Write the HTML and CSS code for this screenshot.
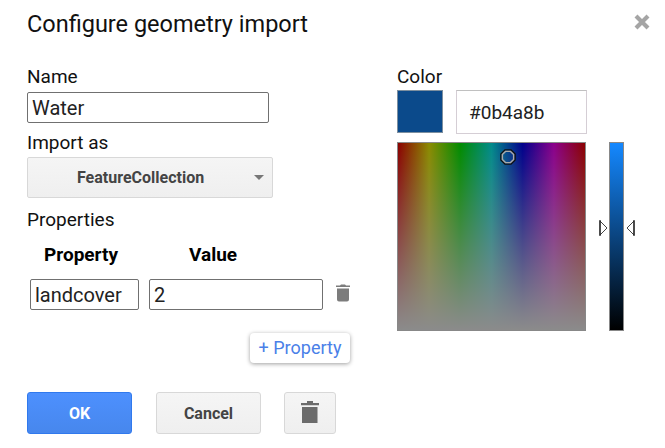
FILE: index.html
```html
<!DOCTYPE html>
<html lang="en">
<head>
<meta charset="utf-8">
<title>Configure geometry import</title>
<link rel="stylesheet" href="styles.css">
</head>
<body>
<main class="dialog">
  <header class="header">
    <h1 class="title">Configure geometry import</h1>
    <svg class="close" viewBox="0 0 18 18"><path d="M3 3L15 15M15 3L3 15"/></svg>
  </header>
  <div class="content">
    <section class="form">
      <label class="label name-label">Name</label>
      <input class="field" type="text" value="Water">
      <label class="label import-label">Import as</label>
      <div class="button select"><span class="select-text">FeatureCollection</span><i class="caret"></i></div>
      <div class="label properties-label">Properties</div>
      <div class="row heads"><span class="head">Property</span><span class="head">Value</span></div>
      <div class="row">
        <input class="field" type="text" value="landcover">
        <input class="field" type="text" value="2">
        <svg class="delete" viewBox="0 0 14 18"><path d="M0 1.5H4L5 .5H9L10 1.5H14V3H0ZM1 4.5H13V15.5Q13 17.5 11 17.5H3Q1 17.5 1 15.5Z"/></svg>
      </div>
      <div class="add">+ Property</div>
      <div class="actions">
        <div class="button action primary"><span class="ok">OK</span></div>
        <div class="button action"><span class="cancel">Cancel</span></div>
        <div class="button action trash"><svg class="trash-icon" viewBox="0 0 18 22"><path d="M0 2H6V0H12V2H18V4.3H0ZM1 6H16.5V22H1Z"/></svg></div>
      </div>
    </section>
    <section class="color">
      <div class="label color-label">Color</div>
      <div class="color-value"><div class="swatch"></div><input class="hex" type="text" value="#0b4a8b"></div>
      <div class="picker">
        <div class="spectrum"><svg class="cursor" viewBox="0 0 16 16"><path class="ring-dark" d="M5 .9H11L15.1 5V11L11 15.1H5L.9 11V5Z"/><path class="ring-light" d="M5.5 2.4H10.5L13.6 5.5V10.5L10.5 13.6H5.5L2.4 10.5V5.5Z"/></svg></div>
        <svg class="arrow" viewBox="0 0 9 16"><path d="M1 1V15L8 8Z"/><path class="bar" d="M1 0V16"/></svg>
        <div class="brightness"></div>
        <svg class="arrow" viewBox="0 0 9 16"><path d="M8 1V15L1 8Z"/><path class="bar" d="M8 0V16"/></svg>
      </div>
    </section>
  </div>
</main>
</body>
</html>
```
FILE: styles.css
```css
* { box-sizing: border-box; }
body { margin: 0; background: #fff; color: #111; font-family: Roboto, sans-serif; overflow: hidden; }
svg { display: block; flex: none; }
.dialog { width: 665px; height: 448px; padding: 0 14px 0 27px; }
.header { height: 65px; display: flex; justify-content: space-between; align-items: flex-start; }
.title { margin: 10px 0 0; font-size: 23.5px; line-height: 28px; font-weight: 400; white-space: nowrap; }
.close { width: 18px; height: 18px; margin: 13px 0 0; }
.close path { stroke: #a5a5a5; stroke-width: 4.2; fill: none; }
.content { display: flex; }
.form { width: 370px; flex: none; display: flex; flex-direction: column; align-items: flex-start; }
.label { display: block; font-size: 19px; line-height: 24px; white-space: nowrap; }
.field { width: 242px; height: 31px; margin: 0; padding: 0 4px; border: 1px solid #707070; border-radius: 2px; background: #fff; color: #222; font: 20px Roboto, sans-serif; outline: 0; }
.name-label { margin-bottom: 3px; }
.import-label { margin: 8px 0 2px; }
.button { border: 1px solid #d8d8d8; border-radius: 3px; background: linear-gradient(#f5f5f5, #efefef); color: #444; font-size: 16px; font-weight: 700; display: flex; align-items: center; justify-content: center; }
.select { width: 246px; height: 41px; justify-content: space-between; padding: 0 8px 0 49px; border-radius: 2px; }
.caret { border: 5px solid transparent; border-top-color: #777; border-bottom: 0; }
.properties-label { margin: 10px 0 9px; }
.row { display: flex; align-items: center; gap: 10px; margin-left: 3px; }
.row .field:first-child { width: 109px; }
.row .field:nth-child(2) { width: 174px; }
.heads { height: 26px; margin-bottom: 12px; }
.head { font-size: 19px; font-weight: 700; color: #000; }
.heads { padding-left: 14px; gap: 71px; }
.delete { width: 14px; height: 18px; margin: -3px 0 0 3px; fill: #7c7c7c; }
.add { width: 100px; height: 30px; margin: 23px 0 0 223px; border-radius: 4px; box-shadow: 0 1px 4px rgba(0,0,0,.38); color: #4a80e8; font-size: 18px; line-height: 30px; text-align: center; white-space: nowrap; }
.actions { display: flex; margin-top: 29px; }
.action { width: 105px; height: 42px; margin-right: 24px; }
.primary { border-color: #3079ed; background: linear-gradient(#4d90fe, #4787ed); color: #fff; }
.trash { width: 52px; margin: 0 0 0 -1px; }
.trash-icon { width: 18px; height: 22px; margin-top: -2px; fill: #6b6b6b; }
.color-value { display: flex; gap: 13px; margin-top: 1px; }
.swatch { width: 46px; height: 43px; border: 1px solid #7d8f9f; background: #0b4a8b; }
.hex { width: 131px; height: 44px; padding: 0 12px; border: 1px solid #d5ced5; border-top-color: #c0c0c0; font: 19px Roboto, sans-serif; color: #222; }
.picker { display: flex; align-items: center; margin-top: 8px; }
.spectrum { position: relative; width: 189px; height: 189px; margin-right: 13px; border: 1px solid #888; background: linear-gradient(rgba(139,139,139,0), #8b8b8b), linear-gradient(90deg, #8b0000, #8b8b00 16.67%, #008b00 33.33%, #008b8b 50%, #00008b 66.67%, #8b008b 83.33%, #8b0000); }
.cursor { position: absolute; left: 102px; top: 6px; width: 16px; height: 16px; fill: none; stroke-width: 1.4; }
.ring-dark { stroke: #111; }
.ring-light { stroke: #aaa; }
.brightness { width: 15px; height: 189px; margin: 0 2px 0 1px; border: 1px solid #888; background: linear-gradient(#1488ff, #000); }
.arrow { width: 9px; height: 16px; margin-top: -17px; fill: #fff; stroke: #444; stroke-width: 1; }
.arrow .bar { stroke: #111; stroke-width: 1.2; }
```
